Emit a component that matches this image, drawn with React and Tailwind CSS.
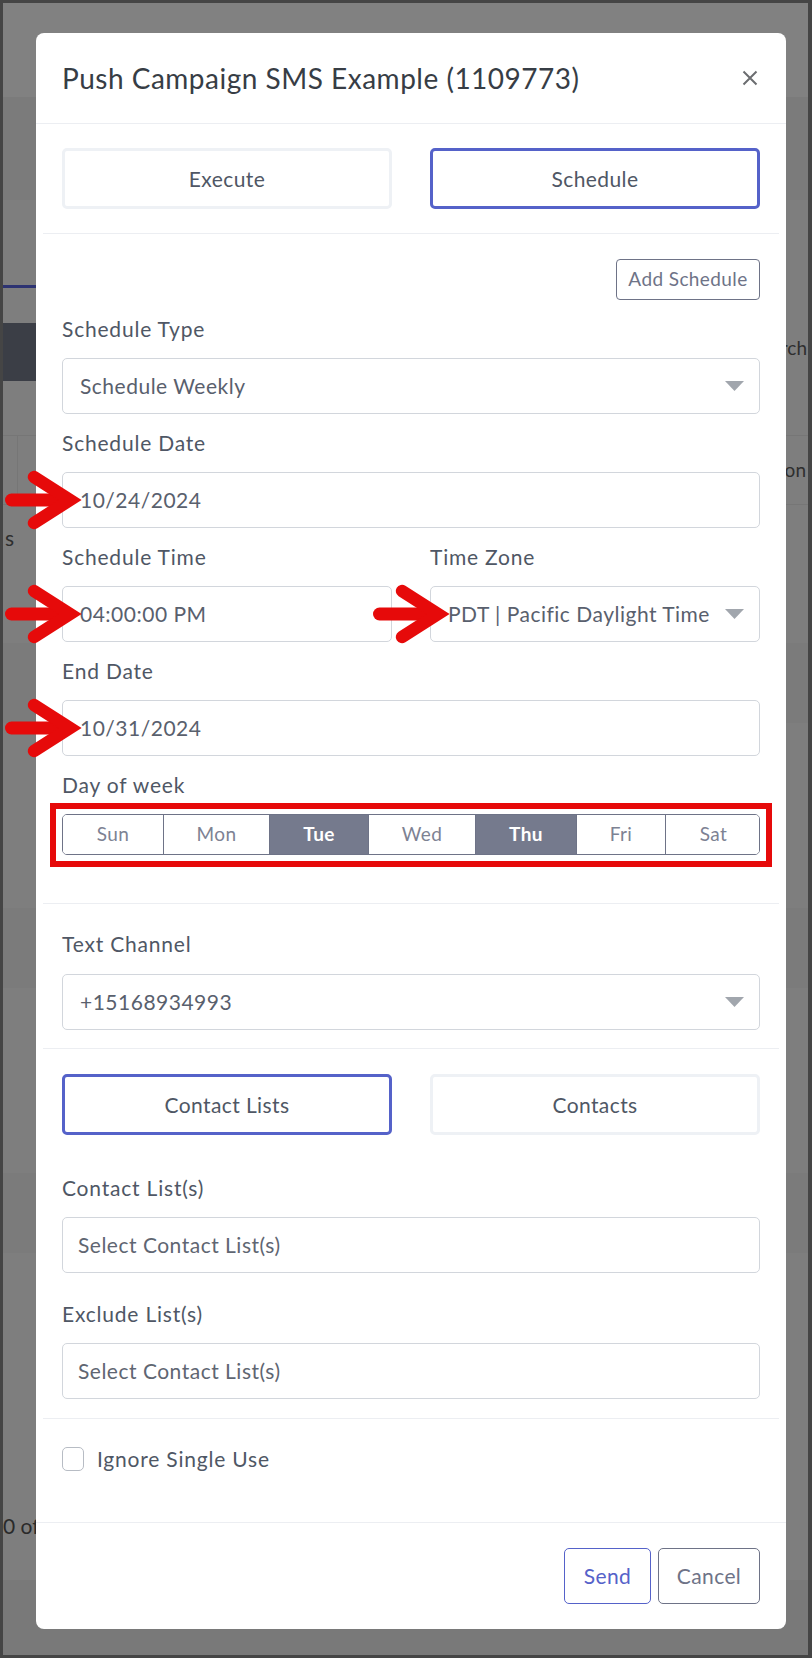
import React from "react";

const RED = "#e60a0a";

const Arrow = ({ className = "" }) => (
  <svg
    className={`pointer-events-none absolute z-20 ${className}`}
    width="82"
    height="64"
    viewBox="0 0 82 64"
  >
    <line x1="8.5" y1="32" x2="62" y2="32" stroke={RED} strokeWidth="13" strokeLinecap="round" />
    <polyline
      points="31,9 67,32 31,55"
      fill="none"
      stroke={RED}
      strokeWidth="12.5"
      strokeLinecap="round"
      strokeLinejoin="miter"
    />
  </svg>
);

const Caret = () => (
  <svg className="absolute right-[15px] top-1/2 -translate-y-1/2" width="19" height="10" viewBox="0 0 19 10">
    <path d="M0 0h19L9.5 10z" fill="#a1a6ad" />
  </svg>
);

const Label = ({ children, className = "" }) => (
  <div className={`h-[30px] leading-[30px] text-[21px] tracking-[0.8px] text-[#4f5765] ${className}`}>{children}</div>
);

const Field = ({ children, caret, arrow, placeholder, className = "" }) => (
  <div
    className={`relative mt-[14px] flex h-[56px] items-center rounded-[5px] border border-[#d2d6dc] bg-white text-[21px] tracking-[0.5px] ${
      placeholder ? "pl-[15px] text-[#5f6672]" : "pl-[17px] text-[#59606d]"
    } ${className}`}
  >
    {arrow && <Arrow className="-left-[60px] top-1/2 -translate-y-1/2" />}
    <span className="whitespace-nowrap">{children}</span>
    {caret && <Caret />}
  </div>
);

const Divider = () => <div className="mx-[7px] h-px bg-[#eceef2]" />;

const TabButton = ({ active, children }) => (
  <div
    className={`flex h-[61px] items-center justify-center rounded-[5px] border-[3px] bg-white text-[21px] tracking-[0.4px] text-[#4f5765] ${
      active ? "border-[#5562c9]" : "border-[#eef1f5]"
    }`}
  >
    {children}
  </div>
);

const days = [
  { n: "Sun", w: "w-[100px]", on: false },
  { n: "Mon", w: "w-[106px]", on: false },
  { n: "Tue", w: "w-[99px]", on: true },
  { n: "Wed", w: "w-[107px]", on: false },
  { n: "Thu", w: "w-[101px]", on: true },
  { n: "Fri", w: "w-[89px]", on: false },
  { n: "Sat", w: "w-[96px]", on: false },
];

/* The page that lies under the modal's dark overlay */
const Backdrop = () => (
  <div className="absolute inset-0 flex flex-col">
    <div className="h-[94px] shrink-0 bg-[#818181]" />
    <div className="h-[103px] shrink-0 bg-[#7b7b7b]" />
    <div className="flex h-[88px] shrink-0 items-end">
      <div className="h-[3px] w-[40px] bg-[#2d3372]" />
    </div>
    <div className="mt-[35px] h-[58px] w-[40px] shrink-0 bg-[#3b3e46]" />
    <div className="mt-[54px] flex h-[70px] shrink-0 justify-between border-y border-[#767676]">
      <div className="ml-[14px] w-px bg-[#767676]" />
      <div className="mr-[2px] self-center text-[19px] leading-[30px] text-[#2e2e2e]">on</div>
    </div>
    <div className="pl-[2px] pt-[18px] text-[21px] leading-[30px] text-[#2e2e2e]">s</div>
    <div className="mt-[90px] h-[80px] shrink-0 bg-[#7b7b7b]" />
    <div className="mt-[185px] h-[80px] shrink-0 bg-[#7b7b7b]" />
    <div className="mt-[185px] h-[80px] shrink-0 bg-[#7b7b7b]" />
    <div className="mt-[258px] pl-0 text-[21px] leading-[30px] text-[#2a2a2a]">0 of</div>
    <div className="mt-[39px] flex-1 bg-[#797979]" />
    <div className="absolute right-[1px] top-[330px] text-[19px] leading-[30px] text-[#2e2e2e]">rch</div>
  </div>
);

export default function App() {
  return (
    <div className="relative h-[1658px] w-[812px] overflow-hidden border-[3px] border-r-4 border-[#454545] bg-[#7e7e7e] font-[Lato,'Noto_Sans',sans-serif]">
      <Backdrop />
      <div className="relative z-10 ml-[33px] mt-[30px] w-[750px] rounded-[8px] bg-white">
        {/* Header */}
        <div className="flex h-[91px] items-center justify-between border-b border-[#eceef2] px-[26px]">
          <div className="text-[28px] tracking-[0.5px] text-[#373d45]">Push Campaign SMS Example (1109773)</div>
          <svg width="16" height="16" viewBox="0 0 16 16" className="mr-[2px]">
            <path d="M1.5 1.5l13 13M14.5 1.5l-13 13" stroke="#6b6d70" strokeWidth="2" />
          </svg>
        </div>

        {/* Execute / Schedule */}
        <div className="grid grid-cols-2 gap-[38px] px-[26px] pb-[24px] pt-[24px]">
          <TabButton>Execute</TabButton>
          <TabButton active>Schedule</TabButton>
        </div>
        <Divider />

        {/* Schedule section */}
        <div className="px-[26px] pb-[48px] pt-[25px]">
          <div className="flex justify-end">
            <div className="flex h-[41px] w-[144px] items-center justify-center rounded-[4px] border border-[#6e7387] text-[19px] tracking-[0.4px] text-[#6e7387]">
              Add Schedule
            </div>
          </div>
          <Label className="mt-[14px]">Schedule Type</Label>
          <Field caret>Schedule Weekly</Field>

          <Label className="mt-[14px]">Schedule Date</Label>
          <Field arrow>10/24/2024</Field>

          <div className="mt-[14px] grid grid-cols-2 gap-[38px]">
            <div>
              <Label>Schedule Time</Label>
              <Field arrow>04:00:00 PM</Field>
            </div>
            <div>
              <Label>Time Zone</Label>
              <Field arrow caret>PDT | Pacific Daylight Time</Field>
            </div>
          </div>

          <Label className="mt-[14px]">End Date</Label>
          <Field arrow>10/31/2024</Field>

          <Label className="mt-[14px]">Day of week</Label>
          <div className="relative mt-[14px]">
            <div className="pointer-events-none absolute -bottom-[12px] -left-[12px] -right-[12px] -top-[11px] border-[6px] border-[#e60a0a]" />
            <div className="flex h-[41px] overflow-hidden rounded-[5px] border border-[#6e7387]">
              {days.map((d, i) => (
                <div
                  key={d.n}
                  className={`flex shrink-0 items-center justify-center text-[19px] tracking-[0.4px] ${d.w} ${
                    i > 0 ? "border-l border-[#6e7387]" : ""
                  } ${d.on ? "bg-[#757a8d] font-bold text-white" : "bg-white text-[#7d8293]"}`}
                >
                  {d.n}
                </div>
              ))}
            </div>
          </div>
        </div>
        <Divider />

        {/* Text channel */}
        <div className="px-[26px] pb-[18px] pt-[25px]">
          <Label>Text Channel</Label>
          <Field caret className="mt-[15px]">+15168934993</Field>
        </div>
        <Divider />

        {/* Contacts */}
        <div className="px-[26px] pb-[19px] pt-[25px]">
          <div className="grid grid-cols-2 gap-[38px]">
            <TabButton active>Contact Lists</TabButton>
            <TabButton>Contacts</TabButton>
          </div>
          <Label className="mt-[38px]">Contact List(s)</Label>
          <Field placeholder>Select Contact List(s)</Field>
          <Label className="mt-[26px]">Exclude List(s)</Label>
          <Field placeholder>Select Contact List(s)</Field>
        </div>
        <Divider />

        {/* Checkbox */}
        <div className="px-[26px] pb-[48px] pt-[25px]">
          <div className="flex h-[30px] items-center">
            <div className="h-[24px] w-[22px] rounded-[5px] border border-[#b7bcc4] bg-white" />
            <span className="ml-[13px] text-[21px] tracking-[0.8px] text-[#4f5765]">Ignore Single Use</span>
          </div>
        </div>

        {/* Footer */}
        <div className="flex justify-end gap-[7px] border-t border-[#eceef2] px-[26px] pb-[25px] pt-[25px]">
          <div className="flex h-[56px] w-[87px] items-center justify-center rounded-[5px] border border-[#5562c9] text-[21px] tracking-[0.4px] text-[#5562c9]">
            Send
          </div>
          <div className="flex h-[56px] w-[102px] items-center justify-center rounded-[5px] border border-[#6e7387] text-[21px] tracking-[0.4px] text-[#6e7387]">
            Cancel
          </div>
        </div>
      </div>
    </div>
  );
}
